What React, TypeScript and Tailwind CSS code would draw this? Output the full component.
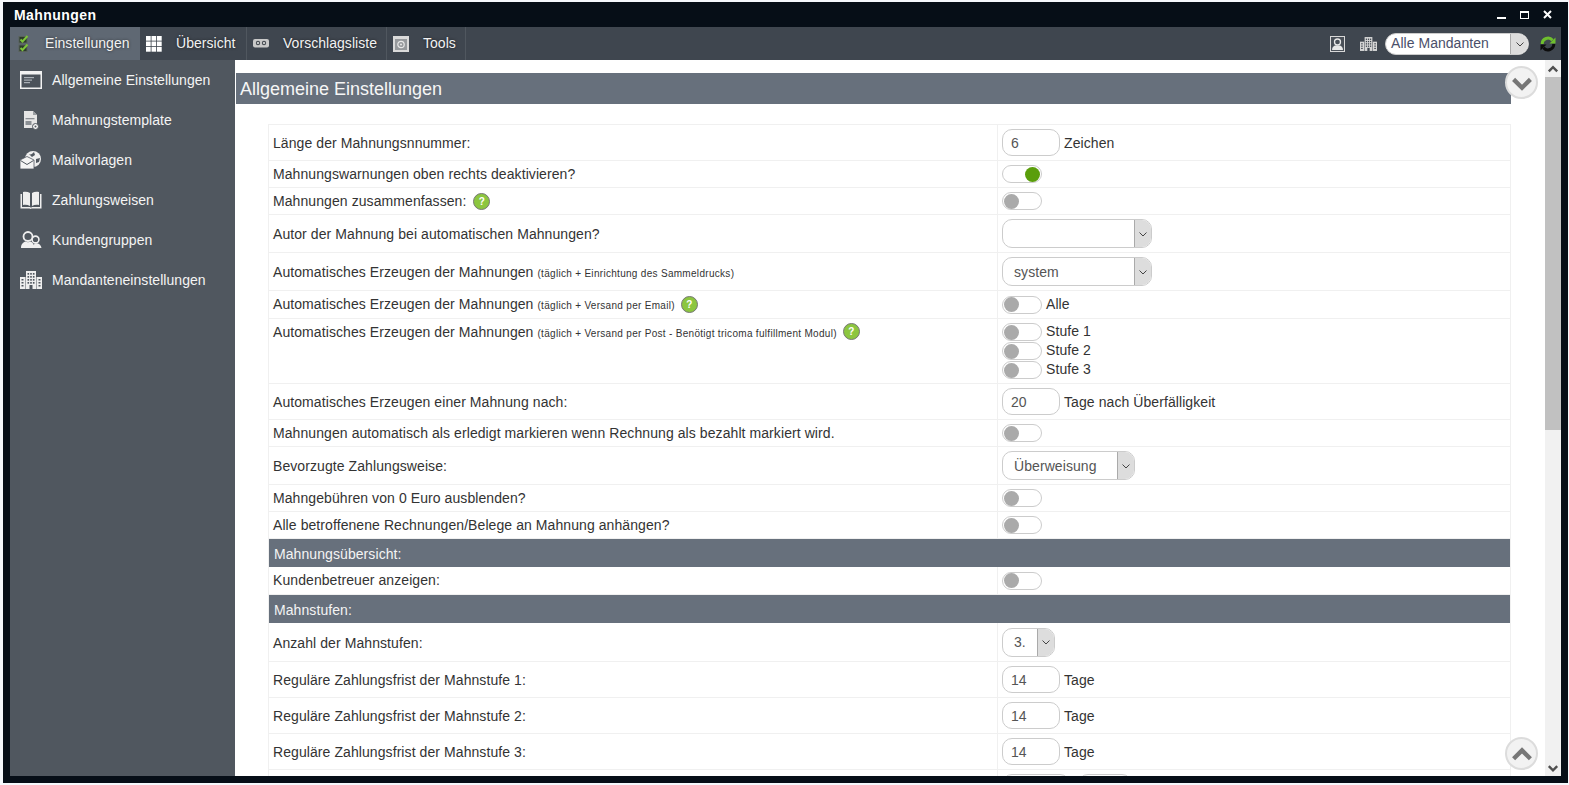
import React from "react";

const ChecksIcon = () => (
  <svg width="12" height="18" viewBox="0 0 12 18" className="shrink-0">
    <rect x="1" y="1.5" width="8" height="6.5" fill="#2c3a2c" stroke="#59625a" />
    <rect x="1" y="10" width="8" height="6.5" fill="#2c3a2c" stroke="#59625a" />
    <path d="M2.5 4.5l2 2 5-5.5" fill="none" stroke="#7cc43a" strokeWidth="2" />
    <path d="M2.5 13l2 2 5-5.5" fill="none" stroke="#7cc43a" strokeWidth="2" />
  </svg>
);
const GridIcon = () => (
  <svg width="16" height="16" viewBox="0 0 16 16" className="shrink-0">
    {[0, 5.5, 11].map((y) =>
      [0, 5.5, 11].map((x) => <rect key={`${x}-${y}`} x={x} y={y} width="4.7" height="4.7" fill="#fff" />)
    )}
  </svg>
);
const BillIcon = () => (
  <svg width="16" height="16" viewBox="0 0 16 16" className="shrink-0">
    <rect x="0" y="3" width="16" height="8.5" rx="2" fill="#c9c9c9" />
    <circle cx="5" cy="7" r="2.2" fill="#4a4f55" />
    <circle cx="11" cy="7" r="2.2" fill="#4a4f55" />
    <circle cx="5" cy="7" r="1" fill="#e8e8e8" />
    <circle cx="11" cy="7" r="1" fill="#e8e8e8" />
  </svg>
);
const ToolsIcon = () => (
  <svg width="16" height="16" viewBox="0 0 16 16" className="shrink-0">
    <rect x="0" y="0" width="16" height="16" fill="#dadada" />
    <rect x="2" y="3" width="12" height="11" fill="#96999c" />
    <circle cx="8" cy="8.5" r="3.2" fill="none" stroke="#e8e8e8" strokeWidth="1.2" />
    <circle cx="8" cy="8.5" r="1" fill="#e8e8e8" />
  </svg>
);
const WindowIcon = () => (
  <svg width="22" height="18" viewBox="0 0 22 18">
    <rect x="0.75" y="0.75" width="20.5" height="16.5" fill="#4b525a" stroke="#f2f2f2" strokeWidth="1.5" />
    <rect x="1" y="1" width="20" height="2.5" fill="#f2f2f2" />
    <rect x="4" y="6" width="10" height="1.2" fill="#aab0b6" />
    <rect x="4" y="8.5" width="8" height="1.2" fill="#aab0b6" />
    <rect x="4" y="11" width="6" height="1.2" fill="#aab0b6" />
  </svg>
);
const DocIcon = () => (
  <svg width="16" height="20" viewBox="0 0 16 20">
    <path d="M1 1h9l4 4v13H1z" fill="#e6e6e6" />
    <path d="M10 1v4h4" fill="#9b9fa3" />
    <rect x="2.5" y="8" width="9" height="1.3" fill="#8a8f94" />
    <rect x="2.5" y="11" width="6" height="4" fill="#8a8f94" />
    <circle cx="12.5" cy="16.5" r="3" fill="#f2f2f2" stroke="#50575f" />
    <circle cx="12.5" cy="16.5" r="1" fill="#50575f" />
  </svg>
);
const MailIcon = () => (
  <svg width="22" height="18" viewBox="0 0 22 18">
    <circle cx="13" cy="8" r="8" fill="#eeeeee" />
    <path d="M9 3c2 1 3 0 5-2l1 3-3 2zM16 8l4-1-1 4-3 1z" fill="#50575f" />
    <path d="M0 9l7-3.500 7 3.500v9H0z" fill="#f4f4f4" stroke="#50575f" strokeWidth="0.8" />
    <path d="M0.500 9.500l6.500 4 6.500-4" fill="none" stroke="#50575f" strokeWidth="1" />
  </svg>
);
const BookIcon = () => (
  <svg width="22" height="18" viewBox="0 0 22 18">
    <path d="M0.5 3v14.5h9l1 .5 1-.5h10V3h-1.5v13h-8l-1 .7-1-.7h-8V3z" fill="#eee" />
    <path d="M3 1c2.5-.6 5-.3 7 1v13c-2-1.2-4.5-1.5-7-1z" fill="#eee" />
    <path d="M19 1c-2.500-.6-5-.3-7 1v13c2-1.200 4.500-1.500 7-1z" fill="#eee" />
  </svg>
);
const UsersIcon = () => (
  <svg width="22" height="18" viewBox="0 0 22 18">
    <circle cx="15.500" cy="8.500" r="3.400" fill="#50575f" stroke="#eee" strokeWidth="1.600" />
    <path d="M13 17c0-3 1-4.500 3-4.800 3 0 5 1.800 5.500 4.800z" fill="#eee" />
    <circle cx="8" cy="5.500" r="4.500" fill="#50575f" stroke="#eee" strokeWidth="1.800" />
    <path d="M1 17c0-4 2.500-6 4.500-6.500 1.500 1 3.500 1 5 0 2 .5 3.500 2.500 4 6.500z" fill="#f0f0f0" />
  </svg>
);
const BuildingIcon = ({ w = 22, h = 18, c = "#eee", b = "#50575f" }: { w?: number; h?: number; c?: string; b?: string }) => (
  <svg width={w} height={h} viewBox="0 0 22 18">
    <rect x="6" y="0" width="10" height="18" fill={c} />
    <rect x="0" y="6" width="5.500" height="12" fill={c} />
    <rect x="16.500" y="6" width="5.500" height="12" fill={c} />
    {[2, 5, 8, 11].map((y) =>
      [7.500, 10.200, 12.900].map((x) => <rect key={`${x}-${y}`} x={x} y={y} width="1.600" height="1.700" fill={b} />)
    )}
    {[8, 11, 14].map((y) => (
      <React.Fragment key={y}>
        <rect x="1.500" y={y} width="2" height="1.500" fill={b} />
        <rect x="18.500" y={y} width="2" height="1.500" fill={b} />
      </React.Fragment>
    ))}
    <rect x="9.500" y="14" width="3" height="4" fill={b} />
  </svg>
);
const PersonIcon = () => (
  <svg width="15" height="16" viewBox="0 0 15 16">
    <rect x="0.500" y="0.500" width="14" height="15" fill="#4a5058" stroke="#d8d8d8" />
    <circle cx="7.500" cy="6" r="3" fill="none" stroke="#e8e8e8" strokeWidth="1.300" />
    <path d="M2 14c0-3 2-4.500 3.500-4.500h4c1.500 0 3.500 1.500 3.500 4.500z" fill="#e8e8e8" />
  </svg>
);
const RefreshIcon = () => (
  <svg width="16" height="16" viewBox="0 0 16 16">
    <path d="M2.200 8A5.800 5.800 0 0 1 12.500 4.300" fill="none" stroke="#6fbf2e" strokeWidth="3" />
    <path d="M15.500 1.500V7.500H9.500z" fill="#6fbf2e" />
    <path d="M13.800 8A5.800 5.800 0 0 1 3.500 11.700" fill="none" stroke="#0c0c0c" strokeWidth="3" />
    <path d="M0.500 14.500V8.500H6.500z" fill="#0c0c0c" />
  </svg>
);
const Chevron = ({ up = false, size = 10, stroke = 1, color = "#444" }: { up?: boolean; size?: number; stroke?: number; color?: string }) => (
  <svg width={size} height={size} viewBox="0 0 10 10">
    <path d={up ? "M1.500 7L5 3.500 8.500 7" : "M1.500 3.500L5 7l3.500-3.500"} fill="none" stroke={color} strokeWidth={stroke} />
  </svg>
);

const tabs = [
  { label: "Übersicht", icon: <GridIcon />, w: "w-[107px]" },
  { label: "Vorschlagsliste", icon: <BillIcon />, w: "w-[140px]" },
  { label: "Tools", icon: <ToolsIcon />, w: "w-[79px]" },
];
const side = [
  { label: "Allgemeine Einstellungen", icon: <WindowIcon /> },
  { label: "Mahnungstemplate", icon: <DocIcon /> },
  { label: "Mailvorlagen", icon: <MailIcon /> },
  { label: "Zahlungsweisen", icon: <BookIcon /> },
  { label: "Kundengruppen", icon: <UsersIcon /> },
  { label: "Mandanteneinstellungen", icon: <BuildingIcon /> },
];

const Help = ({ gap = "ml-[6px]" }: { gap?: string }) => (
  <span className={`${gap} inline-flex h-[17px] w-[17px] shrink-0 items-center justify-center rounded-full border border-[#777] bg-[#8cc63f] text-[10px] font-bold text-white`}>
    ?
  </span>
);
const Toggle = ({ on = false }: { on?: boolean }) => (
  <span className={`flex h-[18px] w-[40px] shrink-0 items-center rounded-full border border-[#ccc] bg-white px-[1px] ${on ? "justify-end" : "justify-start"}`}>
    <span className={`h-[15px] w-[15px] rounded-full ${on ? "bg-[#5a9e0b]" : "bg-[#aaa]"}`} />
  </span>
);
const Input = ({ value, unit, w = "w-[58px]" }: { value: string; unit?: string; w?: string }) => (
  <>
    <span className={`flex h-[27px] ${w} shrink-0 items-center rounded-[10px] border border-[#ccc] bg-white pt-[1px] pl-[8px] text-[#555]`}>{value}</span>
    {unit && <span className="ml-[4px] pt-[1px]">{unit}</span>}
  </>
);
const Select = ({ value, w }: { value: string; w: string }) => (
  <span className={`flex h-[29px] ${w} items-stretch overflow-hidden rounded-[10px] border border-[#ccc] bg-white text-[#555]`}>
    <span className="flex flex-1 items-center pt-[1px] pl-[11px]">{value}</span>
    <span className="flex w-[17px] items-center justify-center border-l border-[#aaa] bg-[#ddd]">
      <Chevron />
    </span>
  </span>
);
const Small = ({ children }: { children: React.ReactNode }) => (
  <span className="text-[10px] tracking-[0.3px]">{children}</span>
);

const Row = ({ h, label, children, top = false }: { h: string; label: React.ReactNode; children?: React.ReactNode; top?: boolean }) => {
  const tall = h !== "h-[27px]" && h !== "h-[28px]";
  return (
    <div className={`grid ${h} grid-cols-[729px_1fr] border-b border-[#f0f0f0]`}>
      <div className={`flex border-r border-[#f0f0f0] pl-[4px] ${top ? "items-start pt-[3px]" : tall ? "items-center pt-[2px]" : "items-center"}`}>
        {label}
      </div>
      <div className="flex items-center pl-[4px]">{children}</div>
    </div>
  );
};
const Section = ({ label }: { label: string }) => (
  <div className="flex h-[28px] items-center bg-[#67707c] pt-[2px] pl-[5px] text-[#f4f4f4]">{label}</div>
);
const Stufe = ({ n }: { n: number }) => (
  <div className="flex h-[19px] items-center gap-[4px]">
    <Toggle />
    <span className="mb-[2px]">Stufe {n}</span>
  </div>
);
const RoundButton = ({ up, className }: { up?: boolean; className: string }) => (
  <div className={`absolute flex h-[33px] w-[33px] items-center justify-center rounded-full border-2 border-[#dcdcdc] bg-[#f2f2f2] ${className}`}>
    <Chevron up={up} size={24} stroke={1.800} color="#777" />
  </div>
);

export default function App() {
  return (
    <div className="flex h-screen w-full overflow-hidden bg-[#f5f8fc] pt-[2px] pb-[2px] pl-[3px] pr-[1px] font-['Liberation_Sans',Arial,sans-serif] text-[14px] tracking-[0.08px] text-[#333]">
      <div className="flex min-w-0 flex-1 flex-col bg-[#060e17] px-[7px] pb-[7px]">
        <header className="flex h-[25px] shrink-0 items-center justify-between pl-[4px] pr-[9px] text-white">
          <span className="pt-[1px] text-[14px] font-bold tracking-[0.45px]">Mahnungen</span>
          <div className="flex items-center">
            <span className="mt-[7px] h-[2px] w-[9px] bg-white" />
            <span className="ml-[14px] h-[8px] w-[9px] border border-t-2 border-white" />
            <svg width="9" height="9" viewBox="0 0 9 9" className="ml-[14px]">
              <path d="M1 1l7 7M8 1L1 8" stroke="#fff" strokeWidth="2" />
            </svg>
          </div>
        </header>

        <nav className="flex h-[33px] shrink-0 items-stretch bg-[#3f464f] tracking-[0.04px] text-[#f2f2f2] [text-shadow:0_0_3px_rgba(0,0,0,0.6)]">
          <div className="flex w-[130px] items-center bg-[#5f6873] pl-[8px]">
            <ChecksIcon />
            <span className="ml-[15px]">Einstellungen</span>
          </div>
          {tabs.map((t) => (
            <div key={t.label} className={`flex ${t.w} items-center border-r border-[#50575f] pl-[6px]`}>
              {t.icon}
              <span className="ml-[14px]">{t.label}</span>
            </div>
          ))}
          <div className="ml-auto flex items-center pr-[5px]">
            <PersonIcon />
            <span className="ml-[15px]">
              <BuildingIcon w={17} h={16} c="#d6d6d6" b="#3f464f" />
            </span>
            <span className="ml-[8px] flex h-[22px] w-[144px] items-stretch overflow-hidden rounded-full border border-[#ccc] bg-white text-[#4a4f6a] [text-shadow:none]">
              <span className="flex flex-1 items-center pl-[5px]">Alle Mandanten</span>
              <span className="flex w-[18px] items-center justify-center border-l border-[#aaa] bg-[#ddd]">
                <Chevron />
              </span>
            </span>
            <span className="ml-[11px]">
              <RefreshIcon />
            </span>
          </div>
        </nav>

        <div className="flex min-h-0 flex-1">
          <aside className="w-[225px] shrink-0 bg-[#50575f] tracking-[0.05px] text-[#f4f4f4]">
            {side.map((s) => (
              <div key={s.label} className="flex h-[40px] items-center">
                <span className="flex w-[42px] shrink-0 justify-center">{s.icon}</span>
                <span>{s.label}</span>
              </div>
            ))}
          </aside>

          <main className="relative min-w-0 flex-1 overflow-hidden bg-white pt-[13px]">
            <div className="mr-[34px] ml-[1px] flex h-[31px] items-center bg-[#67707c] pt-[2px] pl-[4px] text-[18px] tracking-normal text-[#f6f6f6]">
              Allgemeine Einstellungen
            </div>
            <div className="mt-[20px] mr-[34px] ml-[33px] border border-[#f0f0f0]">
              <Row h="h-[36px]" label="Länge der Mahnungsnnummer:">
                <Input value="6" unit="Zeichen" />
              </Row>
              <Row h="h-[27px]" label="Mahnungswarnungen oben rechts deaktivieren?">
                <Toggle on />
              </Row>
              <Row h="h-[27px]" label={<><span>Mahnungen zusammenfassen:</span><Help gap="ml-[7px]" /></>}>
                <Toggle />
              </Row>
              <Row h="h-[38px]" label="Autor der Mahnung bei automatischen Mahnungen?">
                <Select value="" w="w-[150px]" />
              </Row>
              <Row h="h-[38px]" label={<span>Automatisches Erzeugen der Mahnungen <Small>(täglich + Einrichtung des Sammeldrucks)</Small></span>}>
                <Select value="system" w="w-[150px]" />
              </Row>
              <Row h="h-[28px]" label={<><span>Automatisches Erzeugen der Mahnungen <Small>(täglich + Versand per Email)</Small></span><Help /></>}>
                <Toggle />
                <span className="ml-[4px]">Alle</span>
              </Row>
              <Row h="h-[65px]" top label={<><span>Automatisches Erzeugen der Mahnungen <Small>(täglich + Versand per Post - Benötigt tricoma fulfillment Modul)</Small></span><Help gap="ml-[6px] mt-[1px]" /></>}>
                <div>
                  <Stufe n={1} />
                  <Stufe n={2} />
                  <Stufe n={3} />
                </div>
              </Row>
              <Row h="h-[36px]" label="Automatisches Erzeugen einer Mahnung nach:">
                <Input value="20" unit="Tage nach Überfälligkeit" />
              </Row>
              <Row h="h-[27px]" label="Mahnungen automatisch als erledigt markieren wenn Rechnung als bezahlt markiert wird.">
                <Toggle />
              </Row>
              <Row h="h-[38px]" label="Bevorzugte Zahlungsweise:">
                <Select value="Überweisung" w="w-[133px]" />
              </Row>
              <Row h="h-[27px]" label="Mahngebühren von 0 Euro ausblenden?">
                <Toggle />
              </Row>
              <Row h="h-[27px]" label="Alle betroffenene Rechnungen/Belege an Mahnung anhängen?">
                <Toggle />
              </Row>
              <Section label="Mahnungsübersicht:" />
              <Row h="h-[28px]" label="Kundenbetreuer anzeigen:">
                <Toggle />
              </Row>
              <Section label="Mahnstufen:" />
              <Row h="h-[39px]" label="Anzahl der Mahnstufen:">
                <Select value="3." w="w-[53px]" />
              </Row>
              <Row h="h-[36px]" label="Reguläre Zahlungsfrist der Mahnstufe 1:">
                <Input value="14" unit="Tage" />
              </Row>
              <Row h="h-[36px]" label="Reguläre Zahlungsfrist der Mahnstufe 2:">
                <Input value="14" unit="Tage" />
              </Row>
              <Row h="h-[36px]" label="Reguläre Zahlungsfrist der Mahnstufe 3:">
                <Input value="14" unit="Tage" />
              </Row>
              <Row h="h-[36px]" label="">
                <Input value="" w="w-[68px]" />
                <span className="ml-[8px]">
                  <Input value="" w="w-[54px]" />
                </span>
              </Row>
            </div>
            <RoundButton className="top-[6px] right-[7px]" />
            <RoundButton up className="right-[7px] bottom-[6px]" />
          </main>

          <div className="flex w-[16px] shrink-0 flex-col bg-[#f1f1f1]">
            <div className="flex h-[17px] items-center justify-center">
              <Chevron up size={12} stroke={2} color="#505050" />
            </div>
            <div className="h-[353px] bg-[#c1c1c1]" />
            <div className="mt-auto flex h-[17px] items-center justify-center">
              <Chevron size={12} stroke={2} color="#505050" />
            </div>
          </div>
        </div>
      </div>
    </div>
  );
}
